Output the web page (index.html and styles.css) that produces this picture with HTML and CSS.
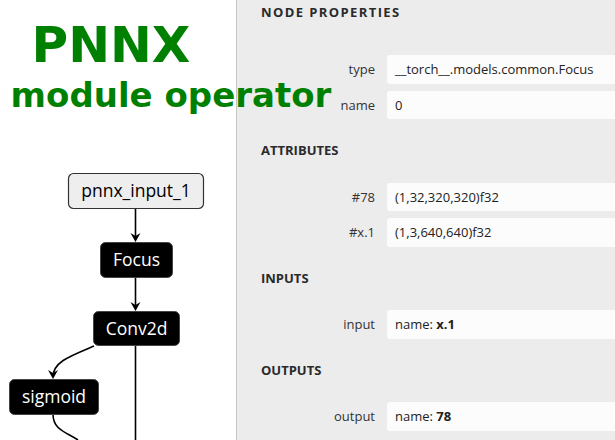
FILE: index.html
```html
<!DOCTYPE html>
<html>
<head>
<meta charset="utf-8">
<link rel="stylesheet" href="styles.css">
</head>
<body>
<div class="app">
  <div class="canvas">
    <div class="title">
      <div class="title-main">PNNX</div>
      <div class="title-sub">module operator</div>
    </div>
    <svg class="graph" width="236" height="440" viewBox="0 0 236 440">
      <g fill="none" stroke="#000" stroke-width="1.6">
        <path d="M135.5 208 V240"/>
        <path d="M135.5 277 V309"/>
        <path d="M94 346 C70 356 53 362 53 377"/>
        <path d="M135.5 345 V440"/>
        <path d="M53 414 C53 430 66 432 78 440"/>
      </g>
      <g fill="#000">
        <path d="M135.5 242 L130.5 233 L135.5 236 L140.5 233 Z"/>
        <path d="M135.5 311 L130.5 302 L135.5 305 L140.5 302 Z"/>
        <path d="M53 379 L48 370 L53 373 L58 370 Z"/>
      </g>
      <rect x="68.5" y="173.5" width="135" height="35" rx="5" fill="#eeeeee" stroke="#333" stroke-width="1.2"/>
      <text x="136" y="197" class="nt dark">pnnx_input_1</text>
      <rect x="100.5" y="242.5" width="72" height="35" rx="5" fill="#000" stroke="#444" stroke-width="1"/>
      <text x="136.5" y="266" class="nt">Focus</text>
      <rect x="93.5" y="311.5" width="86" height="34" rx="5" fill="#000" stroke="#444" stroke-width="1"/>
      <text x="136.5" y="335" class="nt">Conv2d</text>
      <rect x="9.5" y="379.5" width="89" height="35" rx="5" fill="#000" stroke="#444" stroke-width="1"/>
      <text x="54" y="403" class="nt">sigmoid</text>
    </svg>
  </div>
  <div class="panel">
    <div class="heading first">NODE PROPERTIES</div>
    <div class="rows">
      <div class="label">type</div><div class="value">__torch__.models.common.Focus</div>
      <div class="label">name</div><div class="value">0</div>
    </div>
    <div class="heading">ATTRIBUTES</div>
    <div class="rows">
      <div class="label">#78</div><div class="value">(1,32,320,320)f32</div>
      <div class="label">#x.1</div><div class="value">(1,3,640,640)f32</div>
    </div>
    <div class="heading">INPUTS</div>
    <div class="rows">
      <div class="label">input</div><div class="value">name: <b>x.1</b></div>
    </div>
    <div class="heading">OUTPUTS</div>
    <div class="rows">
      <div class="label">output</div><div class="value">name: <b>78</b></div>
    </div>
  </div>
</div>
</body>
</html>
```

FILE: styles.css
```css
html, body {
  margin: 0;
  padding: 0;
  width: 615px;
  height: 440px;
  overflow: hidden;
  background: #fff;
  font-family: "Open Sans", "Noto Sans", sans-serif;
}
.app {
  display: flex;
  height: 440px;
}
.canvas {
  position: relative;
  width: 236px;
  flex: 0 0 236px;
  height: 440px;
  background: #fff;
}
.graph {
  display: block;
}
.nt {
  font-family: "Open Sans", "Noto Sans", sans-serif;
  font-size: 17.5px;
  fill: #fff;
  text-anchor: middle;
}
.nt.dark {
  fill: #000;
}
.title {
  position: absolute;
  left: 0;
  top: 0;
  z-index: 2;
  width: 340px;
  font-family: "DejaVu Sans", sans-serif;
  font-weight: bold;
  color: #008000;
  white-space: nowrap;
}
.title-main {
  position: absolute;
  left: 31.5px;
  top: 14.7px;
  font-size: 50px;
  line-height: 60px;
}
.title-sub {
  position: absolute;
  left: 10.6px;
  top: 75px;
  font-size: 34px;
  line-height: 40px;
}
.panel {
  flex: 0 0 auto;
  width: 400px;
  height: 440px;
  box-sizing: border-box;
  border-left: 1px solid #c4c4c4;
  background: #ececec;
  padding: 3px 0 0 24px;
  color: #333;
}
.heading {
  font-size: 13px;
  font-weight: bold;
  line-height: 18px;
  color: #2a2a2a;
  margin: 22px 0 23.5px;
}
.heading.first {
  margin-top: 0;
  margin-bottom: 34px;
  letter-spacing: 1.4px;
}
.rows {
  display: grid;
  grid-template-columns: 114px 1fr;
  column-gap: 12px;
  row-gap: 7px;
}
.label {
  text-align: right;
  font-size: 13px;
  line-height: 28px;
  height: 28.5px;
  color: #333;
}
.value {
  background: #fcfcfc;
  border-radius: 3px;
  height: 28.5px;
  line-height: 28px;
  padding-left: 8px;
  font-size: 13px;
  color: #222;
}
.value b {
  font-weight: bold;
}
```
